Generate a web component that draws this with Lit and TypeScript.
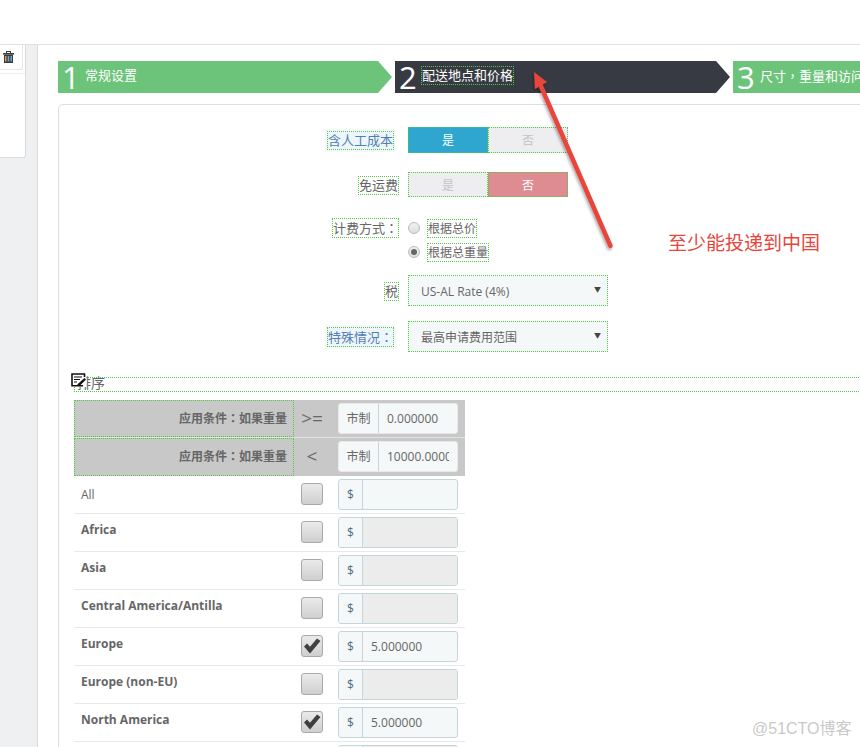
import { LitElement, html, css, svg } from "lit";
import { customElement } from "lit/decorators.js";

const rows = [
  { name: "All", bold: false, on: false, editable: true, value: "" },
  { name: "Africa", bold: true, on: false, editable: false, value: "" },
  { name: "Asia", bold: true, on: false, editable: false, value: "" },
  { name: "Central America/Antilla", bold: true, on: false, editable: false, value: "" },
  { name: "Europe", bold: true, on: true, editable: true, value: "5.000000" },
  { name: "Europe (non-EU)", bold: true, on: false, editable: false, value: "" },
  { name: "North America", bold: true, on: true, editable: true, value: "5.000000" },
  { name: "", bold: true, on: false, editable: false, value: "" },
];

@customElement("app-root")
export class AppRoot extends LitElement {
  static styles = css`
    :host {
      display: block;
      width: 860px;
      height: 747px;
      overflow: hidden;
      position: relative;
      background: #fff;
      font-family: "Open Sans", "Noto Sans CJK SC", sans-serif;
      font-size: 13px;
      color: #666;
    }
    .p { font-family: "Noto Sans CJK TC", sans-serif; }
    .top { height: 44px; border-bottom: 1px solid #e0e0e0; background: #fff; }
    .body { display: flex; height: 702px; }
    .side {
      flex: 0 0 37px;
      background: #eef0f2;
      border-right: 1px solid #dcdcdc;
    }
    .side-card {
      width: 26px;
      height: 113px;
      background: #fff;
      border: solid #dcdcdc;
      border-width: 0 1px 1px 0;
      border-radius: 0 0 3px 0;
      box-sizing: border-box;
    }
    .trash-row {
      width: 23px;
      height: 25px;
      border: solid #e6e6e6;
      border-width: 0 1px 1px 0;
      border-radius: 0 0 3px 0;
      box-sizing: border-box;
      display: flex;
      padding: 6px 0 0 3px;
    }
    .rule { height: 1px; width: 25px; background: #eee; margin-top: 3px; }
    .main { flex: 1; min-width: 0; overflow: hidden; padding: 16px 0 0 20px; }
    .steps { display: flex; gap: 2px; height: 32px; width: 900px; }
    .step {
      flex: 0 0 336px;
      height: 32px;
      background: #6cc47a;
      color: #fff;
      display: flex;
      align-items: center;
      gap: 7px;
      padding-left: 4px;
      box-sizing: border-box;
      clip-path: polygon(0 0, calc(100% - 15px) 0, calc(100% - 1px) 50%, calc(100% - 15px) 100%, 0 100%);
    }
    .step:first-child { flex-basis: 335px; padding-left: 4px; gap: 7px; }
    .step.dark { background: #373a43; }
    .step.last { clip-path: none; }
    .num { font-size: 31px; font-weight: 400; line-height: 32px; width: 16px; }
    .step-label { font-size: 13px; white-space: nowrap; line-height: 17px; margin-top: -3px; }
    .step.dark .step-label { outline: 1px dotted #4ccc3c; }
    .panel {
      margin-top: 11px;
      width: 900px;
      height: 700px;
      box-sizing: border-box;
      border: 1px solid #dedede;
      border-radius: 5px;
      padding-top: 22px;
      background: #fff;
    }
    .row { display: flex; align-items: center; gap: 10px; }
    .r1 { margin-bottom: 19px; height: 26px; }
    .r2 { margin-bottom: 19px; height: 25px; }
    .r3 { margin-bottom: 11px; height: 48px; }
    .r4 { margin-bottom: 15px; height: 31px; }
    .r5 { margin-bottom: 25px; height: 31px; }
    .r3 .lab { align-self: flex-start; padding-top: 3px; }
    .lab { flex: 0 0 339px; text-align: right; }
    .mark { outline: 1px dotted #4ccc3c; line-height: 17px; display: inline-block; }
    .mark.info {
      color: #4f7fb0;
      background: #eff6fb;
      box-shadow: 0 0 0 3px #f2f8fc;
      margin-right: 5px;
    }
    .switch { display: flex; width: 160px; height: 100%; }
    .sw {
      flex: 0 0 80px;
      background: #eeeef0;
      color: #c4c4c4;
      display: flex;
      align-items: center;
      justify-content: center;
      font-size: 12px;
      box-sizing: border-box;
      outline: 1px dotted #4ccc3c;
      outline-offset: -1px;
    }
    .sw.yes { background: #2fa6cf; color: #fff; }
    .sw.no { background: #df8b92; color: #fff; }
    .radios { display: flex; flex-direction: column; gap: 3px; }
    .radio { display: flex; align-items: center; gap: 8px; height: 21px; line-height: 17px; font-size: 12px; }
    .dot {
      width: 12px;
      height: 12px;
      border-radius: 50%;
      border: 1px solid #bbb;
      background: linear-gradient(#f2f2f2, #ddd);
      box-sizing: border-box;
      display: flex;
      align-items: center;
      justify-content: center;
    }
    .dot.on::after { content: ""; width: 6px; height: 6px; border-radius: 50%; background: #666; }
    .select {
      width: 200px;
      height: 31px;
      box-sizing: border-box;
      background: #f5f8f9;
      outline: 1px dotted #4ccc3c;
      outline-offset: -1px;
      display: flex;
      align-items: center;
      justify-content: space-between;
      padding: 1px 7px 0 13px;
      font-size: 12px;
      color: #666;
    }
    .caret { font-size: 7px; color: #444; margin-top: -4px; }
    .sec { margin-left: 15px; position: relative; }
    .legend {
      height: 15px;
      outline: 1px dotted #4ccc3c;
      outline-offset: -1px;
      font-size: 14px;
      line-height: 11px;
      padding-left: 3px;
      margin-bottom: 8px;
      color: #666;
    }
    .edit { position: absolute; left: -3px; top: -4px; width: 15px; height: 14px; }
    .table { width: 391px; }
    .tr { display: flex; height: 38px; box-sizing: border-box; }
    .tr.head { background: #c8c8c8; border-bottom: 1px solid #e2e2e2; }
    .tr.head:nth-child(2) { border-bottom: 0; }
    .tr.item { border-bottom: 1px solid #e8e8e8; }
    .c1 { flex: 0 0 220px; box-sizing: border-box; }
    .head .c1 {
      text-align: right;
      font-size: 12px;
      font-weight: 700;
      color: #666;
      padding: 9px 7px 0 0;
      outline: 1px dotted #4ccc3c;
      outline-offset: -1px;
    }
    .item .c1 { padding: 7px 0 0 7px; font-size: 12px; white-space: nowrap; }
    .item .c1.b { font-weight: 700; }
    .item .c1.plain { padding-top: 10px; font-weight: 400; }
    .c2 { flex: 0 0 44px; display: flex; justify-content: center; box-sizing: border-box; padding-right: 8px; }
    .head .c2 { font-size: 19px; align-items: center; color: #666; padding-bottom: 2px; }
    .item .c2 { padding-top: 7px; }
    .box {
      width: 22px;
      height: 22px;
      box-sizing: border-box;
      border: 1px solid #aaa;
      border-radius: 3px;
      background: linear-gradient(#eaeaea, #cfcfcf);
      display: flex;
      align-items: center;
      justify-content: center;
    }
    .group {
      width: 120px;
      height: 31px;
      box-sizing: border-box;
      display: flex;
      border: 1px solid #c5d6da;
      border-radius: 3px;
      background: #f5f8f9;
      overflow: hidden;
      font-size: 12px;
    }
    .tr.head .group { border-color: #e8e8e8; }
    .head .c3 { padding-top: 3px; }
    .item .c3 { padding-top: 3px; }
    .add {
      flex: 0 0 23px;
      border-right: 1px solid #c5d6da;
      display: flex;
      align-items: center;
      justify-content: center;
      color: #4f6f80;
    }
    .head .add { flex: 0 0 40px; color: #666; padding-bottom: 2px; box-sizing: border-box; }
    .val {
      flex: 1;
      min-width: 0;
      padding: 0 8px;
      line-height: 29px;
      font-size: 12px;
      display: flex;
    }
    .val > span { overflow: hidden; white-space: nowrap; }
    .val.off { background: #ececec; }
    .arrow { position: absolute; left: 0; top: 0; pointer-events: none; }
    .note { position: absolute; left: 668px; top: 229px; font-size: 19px; line-height: 28px; color: #e8453c; white-space: nowrap; }
    .wm {
      position: absolute;
      left: 752px;
      top: 720px;
      font-family: "Liberation Sans", "Noto Sans CJK SC", sans-serif;
      font-size: 16px;
      line-height: 18px;
      color: #c9c9c9;
      white-space: nowrap;
    }
  `;

  private group(addon: string, val: string, off = false) {
    return html`<div class="c3"><div class="group"><span class="add">${addon}</span><span class="val ${off ? "off" : ""}"><span>${val}</span></span></div></div>`;
  }

  render() {
    return html`
      <div class="top"></div>
      <div class="body">
        <aside class="side">
          <div class="side-card">
            <div class="trash-row">
              <svg width="11" height="12" viewBox="0 0 11 12">
                <rect x="3.5" y="0.5" width="4" height="2" fill="none" stroke="#3c3c3c"/>
                <rect x="0" y="2" width="11" height="1.6" fill="#3c3c3c"/>
                <path d="M1 3.6h9V12H1z" fill="#3c3c3c"/>
                <path d="M2 5h1.5v5.5H2z" fill="#d99a5b"/>
                <path d="M4.7 5h1.6v5.5H4.7zM7.5 5H9v5.5H7.5z" fill="#6fa3d0"/>
              </svg>
            </div>
            <div class="rule"></div>
          </div>
        </aside>
        <main class="main">
          <div class="steps">
            <div class="step"><span class="num">1</span><span class="step-label">常规设置</span></div>
            <div class="step dark"><span class="num">2</span><span class="step-label">配送地点和价格</span></div>
            <div class="step last"><span class="num">3</span><span class="step-label">尺寸<span class="p">，</span>重量和访问</span></div>
          </div>
          <div class="panel">
            <div class="row r1">
              <div class="lab"><span class="mark info">含人工成本</span></div>
              <div class="switch"><span class="sw yes">是</span><span class="sw">否</span></div>
            </div>
            <div class="row r2">
              <div class="lab"><span class="mark">免运费</span></div>
              <div class="switch"><span class="sw">是</span><span class="sw no">否</span></div>
            </div>
            <div class="row r3">
              <div class="lab"><span class="mark">计费方式<span class="p">：</span></span></div>
              <div class="radios">
                <div class="radio"><span class="dot"></span><span class="mark">根据总价</span></div>
                <div class="radio"><span class="dot on"></span><span class="mark">根据总重量</span></div>
              </div>
            </div>
            <div class="row r4">
              <div class="lab"><span class="mark">税</span></div>
              <div class="select"><span>US-AL Rate (4%)</span><span class="caret">▼</span></div>
            </div>
            <div class="row r5">
              <div class="lab"><span class="mark info">特殊情况<span class="p">：</span></span></div>
              <div class="select"><span>最高申请费用范围</span><span class="caret">▼</span></div>
            </div>
            <section class="sec">
              <div class="legend">排序</div>
              <svg class="edit" viewBox="0 0 15 14">
                <rect width="15" height="14" fill="#fff"/>
                <path d="M12 12.8H1V1h12.5v3" fill="none" stroke="#111" stroke-width="1.6"/>
                <path d="M3 4h8M3 6.5h6M3 9h3" stroke="#111" stroke-width="1.2"/>
                <path d="M13.5 5 15 6.5 8.5 13H6.5v-1.8z" fill="#111"/>
              </svg>
              <div class="table">
                <div class="tr head">
                  <div class="c1">应用条件<span class="p">：</span>如果重量</div>
                  <div class="c2">&gt;=</div>
                  ${this.group("市制", "0.000000")}
                </div>
                <div class="tr head">
                  <div class="c1">应用条件<span class="p">：</span>如果重量</div>
                  <div class="c2">&lt;</div>
                  ${this.group("市制", "10000.000000")}
                </div>
                ${rows.map(
                  (r) => html`
                    <div class="tr item">
                      <div class="c1 ${r.bold ? "b" : "plain"}">${r.name}</div>
                      <div class="c2">
                        <div class="box">
                          ${r.on
                            ? svg`<svg width="18" height="16" viewBox="0 0 18 16"><path d="M1 8.5 4 5.5l3 3.2L14 .5 17.5 3 7 15.5z" fill="#3f3f3f"/></svg>`
                            : ""}
                        </div>
                      </div>
                      ${this.group("$", r.value, !r.editable)}
                    </div>
                  `
                )}
              </div>
            </section>
          </div>
        </main>
      </div>
      <svg class="arrow" width="860" height="747" viewBox="0 0 860 747">
        <defs>
          <filter id="sh" x="-30%" y="-10%" width="160%" height="120%">
            <feDropShadow dx="-1" dy="2" stdDeviation="1.5" flood-color="#000" flood-opacity="0.35"/>
          </filter>
        </defs>
        <g filter="url(#sh)">
          <path d="M610.5 246 540 84" stroke="#e8453c" stroke-width="4.5" stroke-linecap="round"/>
          <path d="M534 72 547 82 535 89z" fill="#e8453c"/>
        </g>
      </svg>
      <div class="note">至少能投递到中国</div>
      <div class="wm">@51CTO博客</div>
    `;
  }
}
